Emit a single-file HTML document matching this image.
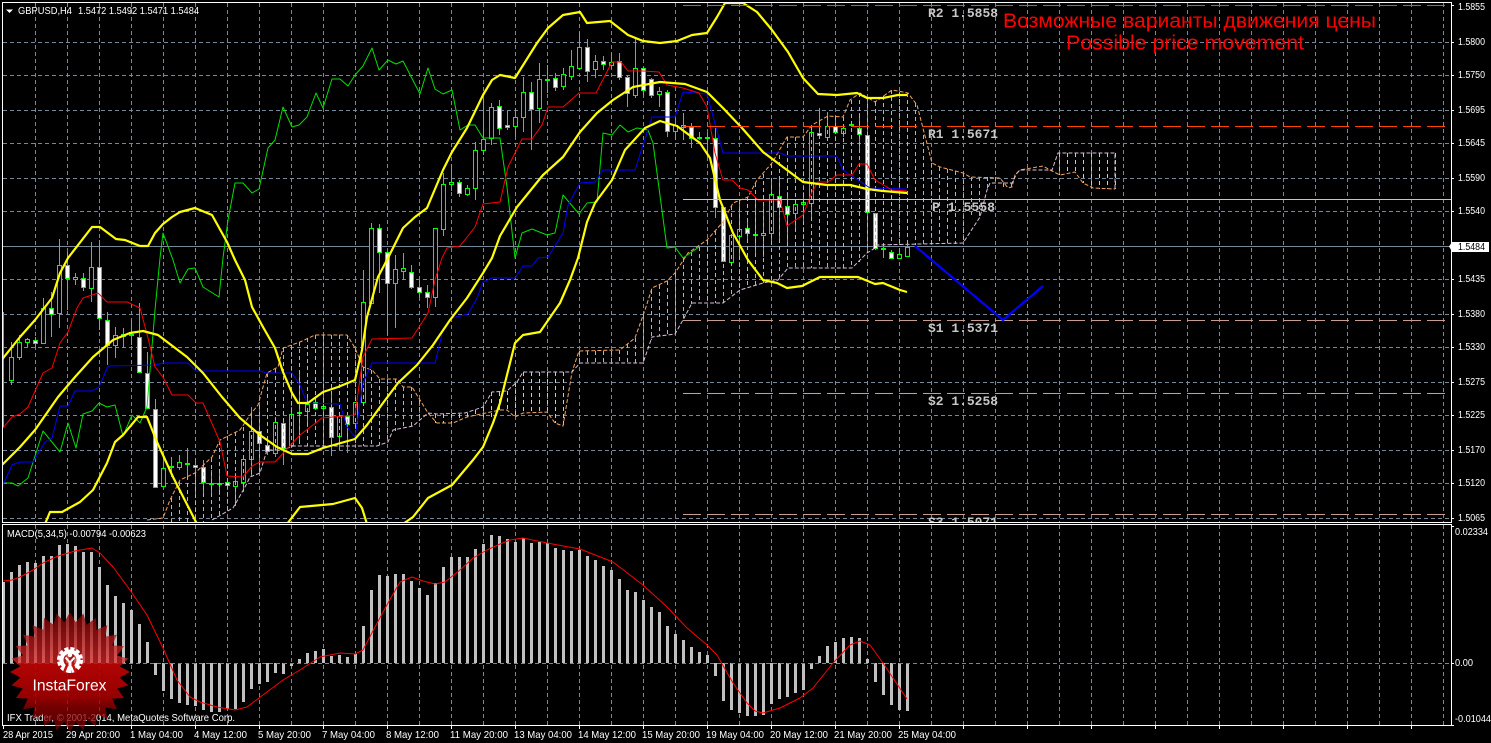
<!DOCTYPE html>
<html><head><meta charset="utf-8"><title>GBPUSD,H4</title>
<style>
html,body{margin:0;padding:0;background:#000;width:1491px;height:743px;overflow:hidden}
svg{display:block}
text{font-family:"Liberation Sans",sans-serif;font-size:10px;fill:#fff}
.p{font-size:10px;fill:#fff}
.l{font-family:"Liberation Mono",monospace;font-size:13px;font-weight:bold;fill:#c8c8c8}
.r{font-size:20px;fill:#f00}
.t{font-size:10.5px}
</style></head>
<body>
<svg width="1491" height="743" viewBox="0 0 1491 743" xmlns="http://www.w3.org/2000/svg">
<defs>
<clipPath id="m"><rect x="3" y="3" width="1448" height="519.5"/></clipPath>
<clipPath id="d"><rect x="3" y="525" width="1448" height="200"/></clipPath>
<linearGradient id="gl" gradientUnits="userSpaceOnUse" x1="0" y1="-60" x2="0" y2="60">
<stop offset="0" stop-color="#7a0000" stop-opacity=".8"/>
<stop offset=".425" stop-color="#e22a2a" stop-opacity=".72"/>
<stop offset=".43" stop-color="#b80404" stop-opacity=".96"/>
<stop offset=".7" stop-color="#a80000" stop-opacity=".9"/>
<stop offset=".8" stop-color="#980000" stop-opacity=".74"/>
<stop offset="1" stop-color="#6e0000" stop-opacity=".74"/>
</linearGradient>
</defs>
<rect width="1491" height="743" fill="#000"/>

<!-- grid main -->
<g clip-path="url(#m)" stroke="#778899" fill="none" shape-rendering="crispEdges" stroke-dasharray="4 3">
<path d="M3 42.5H1451M3 75.5H1451M3 110.5H1451M3 143.5H1451M3 178.5H1451M3 211.5H1451M3 279.5H1451M3 314.5H1451M3 347.5H1451M3 382.5H1451M3 415.5H1451M3 450.5H1451M3 483.5H1451M3 518.5H1451"/>
<path d="M35.5 3V522M67.5 3V522M99.5 3V522M131.5 3V522M163.5 3V522M195.5 3V522M227.5 3V522M259.5 3V522M291.5 3V522M323.5 3V522M355.5 3V522M387.5 3V522M419.5 3V522M451.5 3V522M483.5 3V522M515.5 3V522M547.5 3V522M579.5 3V522M611.5 3V522M643.5 3V522M675.5 3V522M707.5 3V522M739.5 3V522M771.5 3V522M803.5 3V522M835.5 3V522M867.5 3V522M899.5 3V522M931.5 3V522M963.5 3V522M995.5 3V522M1027.5 3V522M1059.5 3V522M1091.5 3V522M1123.5 3V522M1155.5 3V522M1187.5 3V522M1219.5 3V522M1251.5 3V522M1283.5 3V522M1315.5 3V522M1347.5 3V522M1379.5 3V522M1411.5 3V522M1443.5 3V522"/>
</g>
<!-- grid macd -->
<g clip-path="url(#d)" stroke="#778899" fill="none" shape-rendering="crispEdges" stroke-dasharray="4 3">
<path d="M35.5 525V725M67.5 525V725M99.5 525V725M131.5 525V725M163.5 525V725M195.5 525V725M227.5 525V725M259.5 525V725M291.5 525V725M323.5 525V725M355.5 525V725M387.5 525V725M419.5 525V725M451.5 525V725M483.5 525V725M515.5 525V725M547.5 525V725M579.5 525V725M611.5 525V725M643.5 525V725M675.5 525V725M707.5 525V725M739.5 525V725M771.5 525V725M803.5 525V725M835.5 525V725M867.5 525V725M899.5 525V725M931.5 525V725M963.5 525V725M995.5 525V725M1027.5 525V725M1059.5 525V725M1091.5 525V725M1123.5 525V725M1155.5 525V725M1187.5 525V725M1219.5 525V725M1251.5 525V725M1283.5 525V725M1315.5 525V725M1347.5 525V725M1379.5 525V725M1411.5 525V725M1443.5 525V725"/>
<path d="M3 663.5H1451"/>
</g>

<!-- candles -->
<g clip-path="url(#m)" shape-rendering="crispEdges">
<path stroke="#778899" d="M3 246.5H1451" fill="none"/>
<path fill="none" stroke="#00ff00" d="M3.5 312V427M11.5 342V385M19.5 335V360M27.5 338V347M35.5 337V347M43.5 298V343M51.5 292V337M59.5 239V328M67.5 252V310M75.5 273V285M83.5 273V291M91.5 242V302M99.5 240V330M107.5 312V365M115.5 327V358M123.5 328V348M131.5 320V345M139.5 303V373M147.5 352V408M155.5 399V487M163.5 457V487M171.5 457V477M179.5 455V470M187.5 448V478M195.5 458V493M203.5 460V497M211.5 470V493M219.5 473V495M227.5 480V487M235.5 473V503M243.5 458V492M251.5 407V477M259.5 428V453M267.5 438V455M275.5 417V457M283.5 418V465M291.5 407V448M299.5 372V440M307.5 397V427M315.5 398V410M323.5 398V410M331.5 392V456M339.5 415V450M347.5 415V453M355.5 402V425M363.5 270V403M371.5 223V303M379.5 224V293M387.5 252V335M395.5 255V328M403.5 253V280M411.5 265V289M419.5 280V298M427.5 285V308M435.5 228V307M443.5 173V236M451.5 164V191M459.5 180V197M467.5 185V196M475.5 142V200M483.5 98V155M491.5 103V145M499.5 100V135M507.5 111V130M515.5 108V137M523.5 77V132M531.5 82V150M539.5 63V123M547.5 65V93M555.5 73V91M563.5 68V90M571.5 50V80M579.5 32V70M587.5 39V82M595.5 55V78M603.5 56V70M611.5 53V68M619.5 53V80M627.5 75V107M635.5 38V98M643.5 67V95M651.5 78V98M659.5 87V107M667.5 90V137M675.5 117V140M683.5 113V140M691.5 123V148M699.5 132V140M707.5 133V157M715.5 128V218M723.5 207V262M731.5 235V264M739.5 202V258M747.5 222V240M755.5 200V255M763.5 205V257M771.5 180V243M779.5 180V240M787.5 192V243M795.5 200V230M803.5 193V220M811.5 130V217M819.5 108V136M827.5 112V140M835.5 120V133M843.5 125V137M851.5 122V127M859.5 113V150M867.5 133V213M875.5 213V250M883.5 247V258M891.5 250V259M899.5 248V259M907.5 245V257"/>
<path fill="#000" stroke="#00ff00" d="M9.5 357.5h4v23h-4zM17.5 342.5h4v15h-4zM25.5 339.5h4v3h-4zM41.5 308.5h4v35h-4zM57.5 265.5h4v48h-4zM73.5 277.5h4v2h-4zM89.5 267.5h4v21h-4zM113.5 335.5h4v10h-4zM121.5 334.5h4v2h-4zM129.5 334.5h4v1h-4zM161.5 468.5h4v18h-4zM169.5 466.5h4v1h-4zM177.5 462.5h4v5h-4zM185.5 463.5h4v1h-4zM209.5 483.5h4v1h-4zM217.5 483.5h4v1h-4zM233.5 481.5h4v5h-4zM241.5 459.5h4v23h-4zM249.5 431.5h4v28h-4zM273.5 422.5h4v31h-4zM289.5 414.5h4v31h-4zM297.5 412.5h4v1h-4zM305.5 404.5h4v7h-4zM321.5 406.5h4v2h-4zM337.5 416.5h4v20h-4zM353.5 402.5h4v21h-4zM361.5 302.5h4v100h-4zM369.5 228.5h4v75h-4zM393.5 269.5h4v14h-4zM401.5 268.5h4v3h-4zM433.5 228.5h4v69h-4zM441.5 184.5h4v45h-4zM449.5 182.5h4v2h-4zM465.5 188.5h4v6h-4zM473.5 150.5h4v38h-4zM481.5 139.5h4v11h-4zM489.5 107.5h4v31h-4zM513.5 117.5h4v9h-4zM521.5 92.5h4v25h-4zM537.5 79.5h4v29h-4zM545.5 79.5h4v1h-4zM561.5 74.5h4v12h-4zM569.5 66.5h4v10h-4zM577.5 47.5h4v21h-4zM593.5 61.5h4v8h-4zM609.5 62.5h4v3h-4zM633.5 68.5h4v27h-4zM657.5 91.5h4v3h-4zM673.5 125.5h4v6h-4zM681.5 125.5h4v2h-4zM697.5 137.5h4v1h-4zM705.5 137.5h4v1h-4zM729.5 235.5h4v27h-4zM737.5 229.5h4v7h-4zM753.5 234.5h4v1h-4zM761.5 233.5h4v2h-4zM769.5 194.5h4v39h-4zM793.5 204.5h4v9h-4zM801.5 202.5h4v2h-4zM809.5 132.5h4v71h-4zM825.5 126.5h4v11h-4zM841.5 128.5h4v5h-4zM849.5 124.5h4v1h-4zM881.5 248.5h4v1h-4zM897.5 254.5h4v4h-4zM905.5 247.5h4v9h-4z"/>
<path fill="#fff" stroke="#00ff00" d="M33.5 340.5h4v3h-4zM49.5 308.5h4v6h-4zM65.5 265.5h4v13h-4zM81.5 278.5h4v9h-4zM97.5 267.5h4v51h-4zM105.5 320.5h4v25h-4zM137.5 337.5h4v35h-4zM145.5 373.5h4v35h-4zM153.5 409.5h4v78h-4zM193.5 465.5h4v2h-4zM201.5 467.5h4v15h-4zM225.5 482.5h4v3h-4zM257.5 431.5h4v12h-4zM265.5 445.5h4v6h-4zM281.5 423.5h4v25h-4zM313.5 402.5h4v6h-4zM329.5 407.5h4v30h-4zM345.5 416.5h4v8h-4zM377.5 228.5h4v24h-4zM385.5 252.5h4v31h-4zM409.5 272.5h4v15h-4zM417.5 287.5h4v5h-4zM425.5 292.5h4v5h-4zM457.5 182.5h4v11h-4zM497.5 106.5h4v22h-4zM505.5 125.5h4v2h-4zM529.5 92.5h4v17h-4zM553.5 78.5h4v9h-4zM585.5 47.5h4v24h-4zM601.5 61.5h4v3h-4zM617.5 61.5h4v16h-4zM625.5 77.5h4v16h-4zM641.5 68.5h4v22h-4zM649.5 79.5h4v16h-4zM665.5 92.5h4v39h-4zM689.5 127.5h4v11h-4zM713.5 138.5h4v69h-4zM721.5 207.5h4v54h-4zM745.5 228.5h4v5h-4zM777.5 196.5h4v11h-4zM785.5 206.5h4v8h-4zM817.5 133.5h4v2h-4zM833.5 126.5h4v6h-4zM857.5 128.5h4v6h-4zM865.5 135.5h4v77h-4zM873.5 213.5h4v35h-4zM889.5 252.5h4v6h-4z"/>
</g>

<!-- ichimoku cloud -->
<g clip-path="url(#m)" fill="none" stroke-width="1">
<path stroke="#f4a460" stroke-dasharray="4 3" shape-rendering="crispEdges" d="M171.5 498V522M179.5 482V522M187.5 476V522M195.5 473V522M203.5 465V522M211.5 458V520M219.5 441V515M227.5 436V511M235.5 432V507M243.5 427V490M251.5 414V476M259.5 405V473M267.5 373V450M275.5 369V450M283.5 348V450M291.5 345V447M299.5 342V446M307.5 338V446M315.5 335V446M323.5 335V446M331.5 335V446M339.5 335V446M347.5 335V446M355.5 348V446M363.5 367V446M371.5 370V446M379.5 379V445M387.5 379V442M395.5 379V431M403.5 387V428M411.5 387V426M419.5 400V420M579.5 351V363M587.5 351V363M595.5 351V363M603.5 351V363M611.5 351V363M619.5 350V363M627.5 344V363M635.5 338V363M643.5 315V363M651.5 290V340M659.5 285V336M667.5 281V335M675.5 273V334M683.5 258V320M691.5 252V304M699.5 247V303M707.5 240V303M715.5 231V303M723.5 222V303M731.5 206V297M739.5 200V290M747.5 197V287M755.5 183V285M763.5 174V283M771.5 164V281M779.5 155V280M787.5 137V269M795.5 137V268M803.5 137V268M811.5 126V268M819.5 121V268M827.5 116V268M835.5 116V268M843.5 117V268M851.5 100V268M859.5 93V262M867.5 97V253M875.5 102V248M883.5 96V246M891.5 90V245M899.5 92V245M907.5 93V245M915.5 103V245M923.5 135V245M931.5 163V244M939.5 167V244M947.5 169V244M955.5 171V244M963.5 173V243M971.5 177V215M979.5 177V217M987.5 177V190M995.5 177V183M1003.5 183V188M1011.5 183V187"/>
<path stroke="#d8bfd8" stroke-dasharray="4 3" shape-rendering="crispEdges" d="M435.5 414V423M443.5 414V423M451.5 414V423M459.5 414V421M467.5 413V417M475.5 410V417M483.5 407V417M491.5 392V417M499.5 392V410M507.5 391V410M515.5 383V417M523.5 372V413M531.5 372V412M539.5 372V412M547.5 372V412M555.5 372V423M563.5 372V426M1059.5 153V175M1067.5 153V174M1075.5 153V172M1083.5 153V183M1091.5 153V188M1099.5 153V189M1107.5 153V189M1115.5 153V189"/>
<polyline stroke="#f4a460" stroke-dasharray="4 2" points="147,520 163,518 170,500 180,480 195,473 212,457 220,440 240,430 250,415 258,405 267,373 278,367 283,348 300,342 315,335 347,335 355,348 363,367 372,370 380,379 397,379 403,387 412,387 428,413 437,423 453,423 467,417 500,410 507,410 515,417 523,413 547,412 555,423 563,426 572,372 579,351 620,350 635,338 645,310 652,288 667,281 675,273 688,253 707,240 723,222 733,203 748,197 757,180 772,163 787,137 803,137 812,125 828,116 843,117 850,100 860,93 875,102 892,90 908,93 917,105 932,163 940,167 963,173 970,177 1000,178 1008,188 1012,187 1015,175 1020,170 1043,166 1050,170 1060,175 1075,172 1083,183 1093,188 1115,189"/>
<polyline stroke="#d8bfd8" stroke-dasharray="4 2" points="212,520 233,508 245,487 250,477 260,473 267,450 283,450 293,446 377,446 388,442 393,430 413,426 428,413 437,414 465,413 483,407 492,392 507,391 517,382 523,372 572,372 580,363 643,363 652,337 675,334 683,320 692,303 723,303 740,290 763,283 778,280 788,268 852,268 867,253 875,248 877,245 963,243 980,217 987,190 990,183 1012,183 1017,173 1020,170 1052,170 1058,153 1115,153 1115,189"/>
</g>

<!-- thin indicator lines -->
<g clip-path="url(#m)" fill="none" stroke-width="1" stroke-linejoin="round">
<polyline stroke="#00e000" points="3,483 12,483 18,486 28,478 43,431 60,452 68,423 76,448 83,414 92,411 99,403 107,407 115,405 123,436 132,415 140,423 147,407 155,310 160,258 163,233 173,260 180,283 188,269 195,268 203,287 219,297 223,258 228,220 235,183 243,183 252,193 259,189 268,148 275,140 283,107 292,127 299,125 307,117 316,93 323,108 332,79 340,79 348,86 355,75 363,66 372,48 379,70 388,60 396,64 403,61 420,94 428,68 435,89 443,94 452,90 460,130 468,125 475,125 483,138 500,138 507,187 515,258 522,233 532,229 547,235 555,233 563,195 579,214 587,203 597,202 603,133 612,135 620,125 628,132 637,128 648,130 653,143 667,248 675,247 683,258 699,247"/>
<polyline stroke="#0000ff" points="3,485 12,465 20,462 33,462 45,442 52,438 60,406 68,406 75,391 92,391 99,387 108,366 155,365 163,363 188,363 196,371 260,371 267,373 292,373 300,385 307,403 340,404 347,427 355,437 363,383 372,363 435,363 443,330 452,318 468,314 477,298 483,282 492,278 515,278 523,266 532,266 538,258 548,257 563,233 568,205 580,183 595,182 603,170 635,170 652,117 675,117 683,92 707,94 723,153 780,153 787,156 837,156 843,170 870,188 907,189"/>
<polyline stroke="#ff0000" points="3,428 12,417 20,414 28,407 43,373 52,368 60,343 68,332 77,308 83,298 98,293 107,302 127,302 140,308 148,338 155,367 163,377 172,395 188,395 196,403 203,403 220,442 227,476 243,477 252,466 260,462 275,462 300,435 322,418 355,415 363,357 372,339 412,338 428,313 435,280 442,258 447,248 460,246 475,227 483,204 500,202 508,167 522,139 532,139 542,125 548,107 563,107 579,93 596,93 612,62 621,62 628,71 643,71 659,72 667,85 683,88 699,93 707,107 715,153 723,180 732,180 740,188 748,190 758,200 780,200 787,226 803,215 812,192 818,182 828,182 837,175 852,175 859,164 867,164 875,180 892,190 907,191"/>
</g>

<!-- bollinger -->
<g clip-path="url(#m)" fill="none" stroke="#ffff00" stroke-width="2.2" stroke-linejoin="round">
<polyline points="0,362 20,337 35,320 52,298 60,273 68,258 92,227 100,227 116,239 125,240 140,246 148,246 155,233 163,224 172,217 180,212 195,208 212,215 227,242 235,260 245,280 252,307 263,327 275,348 283,372 292,393 298,403 308,403 323,392 338,387 355,380 362,350 367,317 378,277 388,258 403,228 415,217 427,208 443,170 452,152 467,128 483,95 492,80 500,75 515,78 537,43 548,28 563,15 580,12 587,23 610,21 628,35 643,41 660,43 677,41 692,35 707,33 717,17 725,3 743,3 757,12 772,30 788,52 803,78 818,94 837,95 857,93 867,98 883,98 898,95 907,95"/>
<polyline points="0,467 20,447 35,430 58,397 75,377 93,357 113,340 130,333 143,331 158,335 187,357 203,373 222,397 240,418 260,435 277,447 292,454 308,454 323,448 355,439 367,425 383,403 398,383 417,365 433,345 450,320 467,298 483,273 492,258 500,236 517,207 543,175 563,157 580,132 597,113 613,100 633,87 660,82 685,84 707,92 723,108 742,128 763,152 783,167 803,182 827,185 850,185 867,189 883,191 907,193"/>
<polyline points="45,524 50,512 62,512 80,502 93,490 107,463 115,442 123,435 138,417 147,417 157,442 173,477 197,524"/>
<polyline points="287,524 300,507 333,504 355,498 362,508 367,524"/>
<polyline points="403,524 413,517 428,498 452,485 473,460 483,447 493,423 500,403 515,343 523,335 540,332 560,303 570,280 578,258 587,222 595,203 612,180 625,150 645,128 660,121 677,126 700,143 710,158 720,200 733,233 748,260 763,280 777,283 787,288 802,286 820,277 858,277 875,284 883,283 900,290 907,292"/>
</g>

<!-- levels -->
<g clip-path="url(#m)" fill="none" shape-rendering="crispEdges">
<path stroke="#ff4500" stroke-dasharray="18 6" d="M683 5.5H1445M683 126.5H1445"/>
<path stroke="#ffc820" d="M683 199.5H1451"/>
<path stroke="#c89c90" stroke-dasharray="18 6" d="M683 320.5H1445M683 393.5H1445M683 514.5H1445"/>
</g>
<polyline fill="none" stroke="#0000ff" stroke-width="2.2" points="915,246 1003,320 1043,286"/>

<g clip-path="url(#m)">
<text class="l" x="928" y="17" textLength="70" lengthAdjust="spacingAndGlyphs">R2 1.5858</text>
<text class="l" x="928" y="138" textLength="70" lengthAdjust="spacingAndGlyphs">R1 1.5671</text>
<text class="l" x="932" y="211" textLength="63" lengthAdjust="spacingAndGlyphs">P 1.5558</text>
<text class="l" x="928" y="332" textLength="70" lengthAdjust="spacingAndGlyphs">S1 1.5371</text>
<text class="l" x="928" y="405" textLength="70" lengthAdjust="spacingAndGlyphs">S2 1.5258</text>
<text class="l" x="928" y="526" textLength="70" lengthAdjust="spacingAndGlyphs">S3 1.5071</text>
</g>
<text class="r" x="1003" y="27.5" textLength="373" lengthAdjust="spacingAndGlyphs" style="font-family:'Liberation Sans','Noto Sans CJK SC',sans-serif">Возможные варианты движения цены</text>
<text class="r" x="1066" y="49.5" textLength="238" lengthAdjust="spacingAndGlyphs">Possible price movement</text>

<!-- header -->
<path d="M6 9.5h7l-3.5 3.5z" fill="#fff"/>
<text x="18" y="14" textLength="54" lengthAdjust="spacingAndGlyphs" style="font-size:10.5px">GBPUSD,H4</text>
<text x="78" y="14" textLength="121" lengthAdjust="spacingAndGlyphs" style="font-size:10.5px">1.5472 1.5492 1.5471 1.5484</text>

<!-- macd -->
<g clip-path="url(#d)" fill="none">
<path stroke="#c0c0c0" stroke-width="3" shape-rendering="crispEdges" d="M3.5 663V582M11.5 663V572M19.5 663V565M27.5 663V562M35.5 663V563M43.5 663V556M51.5 663V556M59.5 663V545M67.5 663V544M75.5 663V546M83.5 663V552M91.5 663V552M99.5 663V567M107.5 663V585M115.5 663V596M123.5 663V603M131.5 663V610M139.5 663V624M147.5 663V642M155.5 663V675M163.5 663V691M171.5 663V699M179.5 663V703M187.5 663V705M195.5 663V706M203.5 663V710M211.5 663V712M219.5 663V712M227.5 663V709M235.5 663V709M243.5 663V702M251.5 663V689M259.5 663V684M267.5 663V682M275.5 663V673M283.5 663V674M291.5 663V666M299.5 663V659M307.5 663V653M315.5 663V651M323.5 663V649M331.5 663V656M339.5 663V655M347.5 663V657M355.5 663V654M363.5 663V626M371.5 663V590M379.5 663V575M387.5 663V576M395.5 663V574M403.5 663V574M411.5 663V581M419.5 663V588M427.5 663V595M435.5 663V583M443.5 663V567M451.5 663V557M459.5 663V557M467.5 663V557M475.5 663V549M483.5 663V544M491.5 663V535M499.5 663V536M507.5 663V539M515.5 663V542M523.5 663V538M531.5 663V543M539.5 663V542M547.5 663V543M555.5 663V548M563.5 663V550M571.5 663V551M579.5 663V550M587.5 663V556M595.5 663V560M603.5 663V566M611.5 663V570M619.5 663V579M627.5 663V590M635.5 663V592M643.5 663V600M651.5 663V607M659.5 663V612M667.5 663V626M675.5 663V634M683.5 663V640M691.5 663V647M699.5 663V652M707.5 663V655M715.5 663V676M723.5 663V701M731.5 663V710M739.5 663V713M747.5 663V716M755.5 663V716M763.5 663V715M771.5 663V704M779.5 663V699M787.5 663V697M795.5 663V693M803.5 663V690M811.5 663V669M819.5 663V656M827.5 663V646M835.5 663V642M843.5 663V638M851.5 663V637M859.5 663V638M867.5 663V659M875.5 663V682M883.5 663V695M891.5 663V705M899.5 663V710M907.5 663V711"/>
<path stroke="#778899" stroke-dasharray="4 3" shape-rendering="crispEdges" d="M3 663.5H912"/>
<polyline stroke="#ff0000" stroke-width="1" stroke-linejoin="round" points="3,581 12,580 20,577 33,570 43,563 58,556 75,551 92,548 100,553 113,567 130,590 147,615 163,648 177,680 190,697 200,702 217,707 235,710 247,707 263,695 283,680 300,670 320,657 340,653 355,654 363,650 375,627 388,603 400,582 412,577 423,581 435,584 445,582 460,570 473,558 487,550 500,544 510,540 523,538 547,543 580,549 613,562 643,585 667,607 687,628 707,645 717,655 733,683 747,703 755,711 763,713 780,708 800,698 813,688 833,663 850,645 860,641 870,645 883,663 907,699"/>
</g>
<text x="7" y="537" textLength="139" lengthAdjust="spacingAndGlyphs" style="font-size:10.5px">MACD(5,34,5) -0.00794 -0.00623</text>
<text x="7" y="721" textLength="228" lengthAdjust="spacingAndGlyphs" style="font-size:10.5px">IFX Trader, © 2001-2014, MetaQuotes Software Corp.</text>

<!-- frames -->
<g fill="none" stroke="#fff" shape-rendering="crispEdges">
<rect x="2.5" y="2.5" width="1449" height="520"/>
<rect x="2.5" y="524.5" width="1449" height="201"/>
<path d="M1452 5.5h2M1452 42.5h2M1452 75.5h2M1452 110.5h2M1452 143.5h2M1452 178.5h2M1452 211.5h2M1452 279.5h2M1452 314.5h2M1452 347.5h2M1452 382.5h2M1452 415.5h2M1452 450.5h2M1452 483.5h2M1452 518.5h2M1452 526.5h2M1452 663.5h2M1452 725.5h2"/>
<path d="M3.5 726v3M67.5 726v3M131.5 726v3M195.5 726v3M259.5 726v3M323.5 726v3M387.5 726v3M451.5 726v3M515.5 726v3M579.5 726v3M643.5 726v3M707.5 726v3M771.5 726v3M835.5 726v3M899.5 726v3M963.5 726v3M1027.5 726v3M1091.5 726v3M1155.5 726v3M1219.5 726v3M1283.5 726v3M1347.5 726v3M1411.5 726v3"/>
</g>

<!-- price axis -->
<g>
<text class="p" x="1458" y="10" textLength="27" lengthAdjust="spacingAndGlyphs">1.5855</text>
<text class="p" x="1458" y="45" textLength="27" lengthAdjust="spacingAndGlyphs">1.5800</text>
<text class="p" x="1458" y="78" textLength="27" lengthAdjust="spacingAndGlyphs">1.5750</text>
<text class="p" x="1458" y="113" textLength="27" lengthAdjust="spacingAndGlyphs">1.5695</text>
<text class="p" x="1458" y="146" textLength="27" lengthAdjust="spacingAndGlyphs">1.5645</text>
<text class="p" x="1458" y="181" textLength="27" lengthAdjust="spacingAndGlyphs">1.5590</text>
<text class="p" x="1458" y="214" textLength="27" lengthAdjust="spacingAndGlyphs">1.5540</text>
<rect x="1452" y="242" width="37" height="10" fill="#fff"/>
<path d="M1452 242l-3 4.5 3 5z" fill="#fff"/>
<text class="p" x="1458" y="250" textLength="27" lengthAdjust="spacingAndGlyphs" style="fill:#000">1.5484</text>
<text class="p" x="1458" y="282" textLength="27" lengthAdjust="spacingAndGlyphs">1.5435</text>
<text class="p" x="1458" y="317" textLength="27" lengthAdjust="spacingAndGlyphs">1.5380</text>
<text class="p" x="1458" y="350" textLength="27" lengthAdjust="spacingAndGlyphs">1.5330</text>
<text class="p" x="1458" y="385" textLength="27" lengthAdjust="spacingAndGlyphs">1.5275</text>
<text class="p" x="1458" y="418" textLength="27" lengthAdjust="spacingAndGlyphs">1.5225</text>
<text class="p" x="1458" y="453" textLength="27" lengthAdjust="spacingAndGlyphs">1.5170</text>
<text class="p" x="1458" y="486" textLength="27" lengthAdjust="spacingAndGlyphs">1.5120</text>
<text class="p" x="1458" y="521" textLength="27" lengthAdjust="spacingAndGlyphs">1.5065</text>
<text class="p" x="1455" y="535" textLength="33" lengthAdjust="spacingAndGlyphs">0.02334</text>
<text class="p" x="1455" y="666" textLength="18" lengthAdjust="spacingAndGlyphs">0.00</text>
<text class="p" x="1455" y="722" textLength="36" lengthAdjust="spacingAndGlyphs">-0.01044</text>
</g>

<!-- time axis -->
<g>
<text class="t" x="3" y="738" textLength="50" lengthAdjust="spacingAndGlyphs">28 Apr 2015</text>
<text class="t" x="66" y="738" textLength="54" lengthAdjust="spacingAndGlyphs">29 Apr 20:00</text>
<text class="t" x="130" y="738" textLength="53" lengthAdjust="spacingAndGlyphs">1 May 04:00</text>
<text class="t" x="194" y="738" textLength="53" lengthAdjust="spacingAndGlyphs">4 May 12:00</text>
<text class="t" x="258" y="738" textLength="53" lengthAdjust="spacingAndGlyphs">5 May 20:00</text>
<text class="t" x="322" y="738" textLength="53" lengthAdjust="spacingAndGlyphs">7 May 04:00</text>
<text class="t" x="386" y="738" textLength="53" lengthAdjust="spacingAndGlyphs">8 May 12:00</text>
<text class="t" x="450" y="738" textLength="58" lengthAdjust="spacingAndGlyphs">11 May 20:00</text>
<text class="t" x="514" y="738" textLength="58" lengthAdjust="spacingAndGlyphs">13 May 04:00</text>
<text class="t" x="578" y="738" textLength="58" lengthAdjust="spacingAndGlyphs">14 May 12:00</text>
<text class="t" x="642" y="738" textLength="58" lengthAdjust="spacingAndGlyphs">15 May 20:00</text>
<text class="t" x="706" y="738" textLength="58" lengthAdjust="spacingAndGlyphs">19 May 04:00</text>
<text class="t" x="770" y="738" textLength="58" lengthAdjust="spacingAndGlyphs">20 May 12:00</text>
<text class="t" x="834" y="738" textLength="58" lengthAdjust="spacingAndGlyphs">21 May 20:00</text>
<text class="t" x="898" y="738" textLength="58" lengthAdjust="spacingAndGlyphs">25 May 04:00</text>
</g>

<!-- logo -->
<g transform="translate(70 672)">
<polygon fill="url(#gl)" points="60,0 49.7,5.6 58.5,13.4 47.2,16.5 54.1,26 42.3,26.6 46.9,37.4 35.4,35.4 37.4,46.9 26.6,42.3 26,54.1 16.5,47.2 13.4,58.5 5.6,49.7 0,60 -5.6,49.7 -13.4,58.5 -16.5,47.2 -26,54.1 -26.6,42.3 -37.4,46.9 -35.4,35.4 -46.9,37.4 -42.3,26.6 -54.1,26 -47.2,16.5 -58.5,13.4 -49.7,5.6 -60,0 -49.7,-5.6 -58.5,-13.4 -47.2,-16.5 -54.1,-26 -42.3,-26.6 -46.9,-37.4 -35.4,-35.4 -37.4,-46.9 -26.6,-42.3 -26,-54.1 -16.5,-47.2 -13.4,-58.5 -5.6,-49.7 0,-60 5.6,-49.7 13.4,-58.5 16.5,-47.2 26,-54.1 26.6,-42.3 37.4,-46.9 35.4,-35.4 46.9,-37.4 42.3,-26.6 54.1,-26 47.2,-16.5 58.5,-13.4 49.7,-5.6"/>
</g>
<g fill="none" stroke="#fff">
<circle cx="70" cy="660" r="11.5" stroke-width="3" stroke-dasharray="4 2.02"/>
<circle cx="70" cy="660" r="8.5" stroke-width="4"/>
<path d="M64 672.5L67.5 664M76 672.5L72.5 664" stroke="#c01010" stroke-width="2.5"/>
<path d="M65.5 657.5L70 662.5L74.5 657.5" stroke-width="2"/>
<path d="M70 661V673" stroke-width="3"/>
</g>
<circle cx="70" cy="655" r="2.2" fill="#fff"/>
<text x="32.5" y="690.5" textLength="74" lengthAdjust="spacingAndGlyphs" style="font-size:16px">InstaForex</text>
</svg>
</body></html>
